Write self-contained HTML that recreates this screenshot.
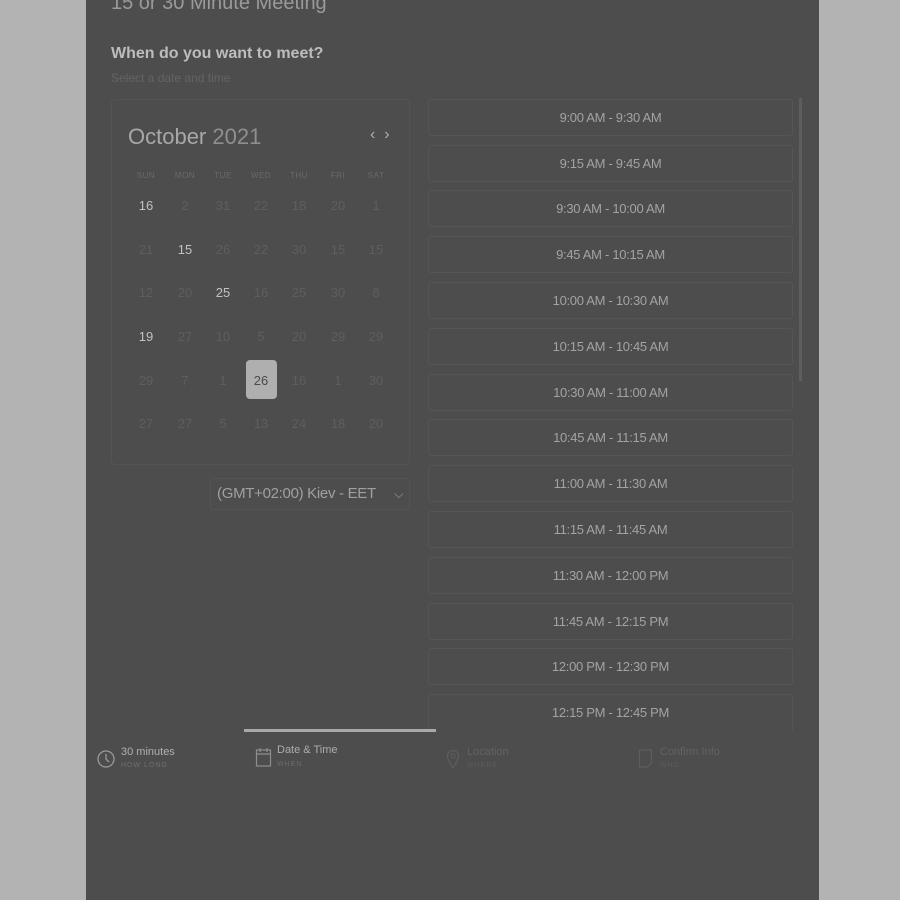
<!DOCTYPE html>
<html><head><style>
*{margin:0;padding:0;box-sizing:border-box}
body{width:900px;height:900px;background:#b3b3b3;font-family:"Liberation Sans",sans-serif;position:relative;overflow:hidden}
.panel{position:absolute;left:86px;top:0;width:733px;height:900px;background:#4d4d4d}
.a{position:absolute}
.slot{position:absolute;left:428px;width:365px;height:37px;border:1px solid #555;border-radius:3px;color:#a3a3a3;font-size:13px;text-align:center;line-height:35px;letter-spacing:-0.3px}
.d{position:absolute;width:32px;text-align:center;font-size:13px;color:#5e5e5e;transform:translate(-16px,-8px)}
.h{position:absolute;width:32px;text-align:center;font-size:8px;color:#6a6a6a;transform:translate(-16px,-5px);letter-spacing:.5px}
.b{color:#c2c2c2}
</style></head><body>
<div class="panel"></div>
<div class="a" style="left:111px;top:-8px;font-size:20px;color:#9a9a9a">15 or 30 Minute Meeting</div>
<div class="a" style="left:111px;top:45px;font-size:16px;font-weight:bold;color:#bdbdbd">When do you want to meet?</div>
<div class="a" style="left:111px;top:71px;font-size:12px;color:#646464">Select a date and time</div>
<div class="a" style="left:111px;top:99px;width:299px;height:366px;border:1px solid #545454;border-radius:4px"></div>
<div class="a" style="left:128px;top:124px;font-size:22px;color:#a8a8a8">October <span style="color:#8f8f8f">2021</span></div>
<div class="a" style="left:370px;top:126px;font-size:16px;color:#b0b0b0">‹ &nbsp;›</div>
<div class="h" style="left:146px;top:176px">SUN</div><div class="h" style="left:185px;top:176px">MON</div><div class="h" style="left:223px;top:176px">TUE</div><div class="h" style="left:261px;top:176px">WED</div><div class="h" style="left:299px;top:176px">THU</div><div class="h" style="left:338px;top:176px">FRI</div><div class="h" style="left:376px;top:176px">SAT</div>
<div class="d b" style="left:146px;top:206px">16</div><div class="d" style="left:185px;top:206px">2</div><div class="d" style="left:223px;top:206px">31</div><div class="d" style="left:261px;top:206px">22</div><div class="d" style="left:299px;top:206px">18</div><div class="d" style="left:338px;top:206px">20</div><div class="d" style="left:376px;top:206px">1</div>
<div class="d" style="left:146px;top:250px">21</div><div class="d b" style="left:185px;top:250px">15</div><div class="d" style="left:223px;top:250px">26</div><div class="d" style="left:261px;top:250px">22</div><div class="d" style="left:299px;top:250px">30</div><div class="d" style="left:338px;top:250px">15</div><div class="d" style="left:376px;top:250px">15</div>
<div class="d" style="left:146px;top:293px">12</div><div class="d" style="left:185px;top:293px">20</div><div class="d b" style="left:223px;top:293px">25</div><div class="d" style="left:261px;top:293px">16</div><div class="d" style="left:299px;top:293px">25</div><div class="d" style="left:338px;top:293px">30</div><div class="d" style="left:376px;top:293px">8</div>
<div class="d b" style="left:146px;top:337px">19</div><div class="d" style="left:185px;top:337px">27</div><div class="d" style="left:223px;top:337px">10</div><div class="d" style="left:261px;top:337px">5</div><div class="d" style="left:299px;top:337px">20</div><div class="d" style="left:338px;top:337px">29</div><div class="d" style="left:376px;top:337px">29</div>
<div class="a" style="left:246px;top:360px;width:31px;height:39px;background:#afafaf;border-radius:4px"></div>
<div class="d" style="left:146px;top:381px">29</div><div class="d" style="left:185px;top:381px">7</div><div class="d" style="left:223px;top:381px">1</div><div class="d" style="left:261px;top:381px;color:#4a4a4a">26</div><div class="d" style="left:299px;top:381px">16</div><div class="d" style="left:338px;top:381px">1</div><div class="d" style="left:376px;top:381px">30</div>
<div class="d" style="left:146px;top:424px">27</div><div class="d" style="left:185px;top:424px">27</div><div class="d" style="left:223px;top:424px">5</div><div class="d" style="left:261px;top:424px">13</div><div class="d" style="left:299px;top:424px">24</div><div class="d" style="left:338px;top:424px">18</div><div class="d" style="left:376px;top:424px">20</div>
<div class="a" style="left:210px;top:478px;width:200px;height:32px;border:1px solid #545454;border-radius:3px;color:#a0a0a0;font-size:15px;line-height:30px;padding-left:6px;letter-spacing:-0.3px">(GMT+02:00) Kiev - EET<span style="position:absolute;right:6px;top:0;font-size:12px">⌵</span></div>
<div class="slot" style="top:99px">9:00 AM - 9:30 AM</div>
<div class="slot" style="top:145px">9:15 AM - 9:45 AM</div>
<div class="slot" style="top:190px">9:30 AM - 10:00 AM</div>
<div class="slot" style="top:236px">9:45 AM - 10:15 AM</div>
<div class="slot" style="top:282px">10:00 AM - 10:30 AM</div>
<div class="slot" style="top:328px">10:15 AM - 10:45 AM</div>
<div class="slot" style="top:374px">10:30 AM - 11:00 AM</div>
<div class="slot" style="top:419px">10:45 AM - 11:15 AM</div>
<div class="slot" style="top:465px">11:00 AM - 11:30 AM</div>
<div class="slot" style="top:511px">11:15 AM - 11:45 AM</div>
<div class="slot" style="top:557px">11:30 AM - 12:00 PM</div>
<div class="slot" style="top:603px">11:45 AM - 12:15 PM</div>
<div class="slot" style="top:648px">12:00 PM - 12:30 PM</div>
<div class="slot" style="top:694px;height:38px">12:15 PM - 12:45 PM</div>
<div class="a" style="left:799px;top:98px;width:3px;height:283px;background:#5e5e5e"></div>
<div class="a" style="left:86px;top:731px;width:733px;height:169px;background:#4d4d4d"></div>
<div class="a" style="left:244px;top:729px;width:192px;height:3px;background:#a9a9a9"></div>
<svg class="a" style="left:97px;top:748px" width="20" height="22"><circle cx="9" cy="11" r="8" fill="none" stroke="#9a9a9a" stroke-width="1.3"/><path d="M9 6v5l3 3" fill="none" stroke="#9a9a9a" stroke-width="1.3"/></svg>
<div class="a" style="left:121px;top:746px;font-size:11px;color:#b0b0b0">30 minutes</div>
<div class="a" style="left:121px;top:762px;font-size:7px;color:#6e6e6e;letter-spacing:1px">HOW LONG</div>
<svg class="a" style="left:255px;top:746px" width="18" height="22"><rect x="1.5" y="4" width="14" height="16" fill="none" stroke="#8e8e8e" stroke-width="1.2"/><path d="M1.5 8h14M5 2v4M12 2v4" stroke="#8e8e8e" stroke-width="1.2"/></svg>
<div class="a" style="left:277px;top:744px;font-size:11px;color:#adadad">Date &amp; Time</div>
<div class="a" style="left:277px;top:761px;font-size:7px;color:#6e6e6e;letter-spacing:1px">WHEN</div>
<svg class="a" style="left:446px;top:748px" width="16" height="22"><path d="M7 20C3 14 1.5 11 1.5 8a5.5 5.5 0 0 1 11 0c0 3-1.5 6-5.5 12z" fill="none" stroke="#5e5e5e" stroke-width="1.2"/><circle cx="7" cy="8" r="2" fill="none" stroke="#5e5e5e"/></svg>
<div class="a" style="left:467px;top:746px;font-size:11px;color:#626262">Location</div>
<div class="a" style="left:467px;top:762px;font-size:7px;color:#5c5c5c;letter-spacing:1px">WHERE</div>
<svg class="a" style="left:638px;top:748px" width="16" height="22"><path d="M1.5 2h12v13l-4 4h-8z" fill="none" stroke="#5e5e5e" stroke-width="1.2"/></svg>
<div class="a" style="left:660px;top:746px;font-size:11px;color:#626262">Confirm Info</div>
<div class="a" style="left:660px;top:762px;font-size:7px;color:#5c5c5c;letter-spacing:1px">WHO</div>
</body></html>
